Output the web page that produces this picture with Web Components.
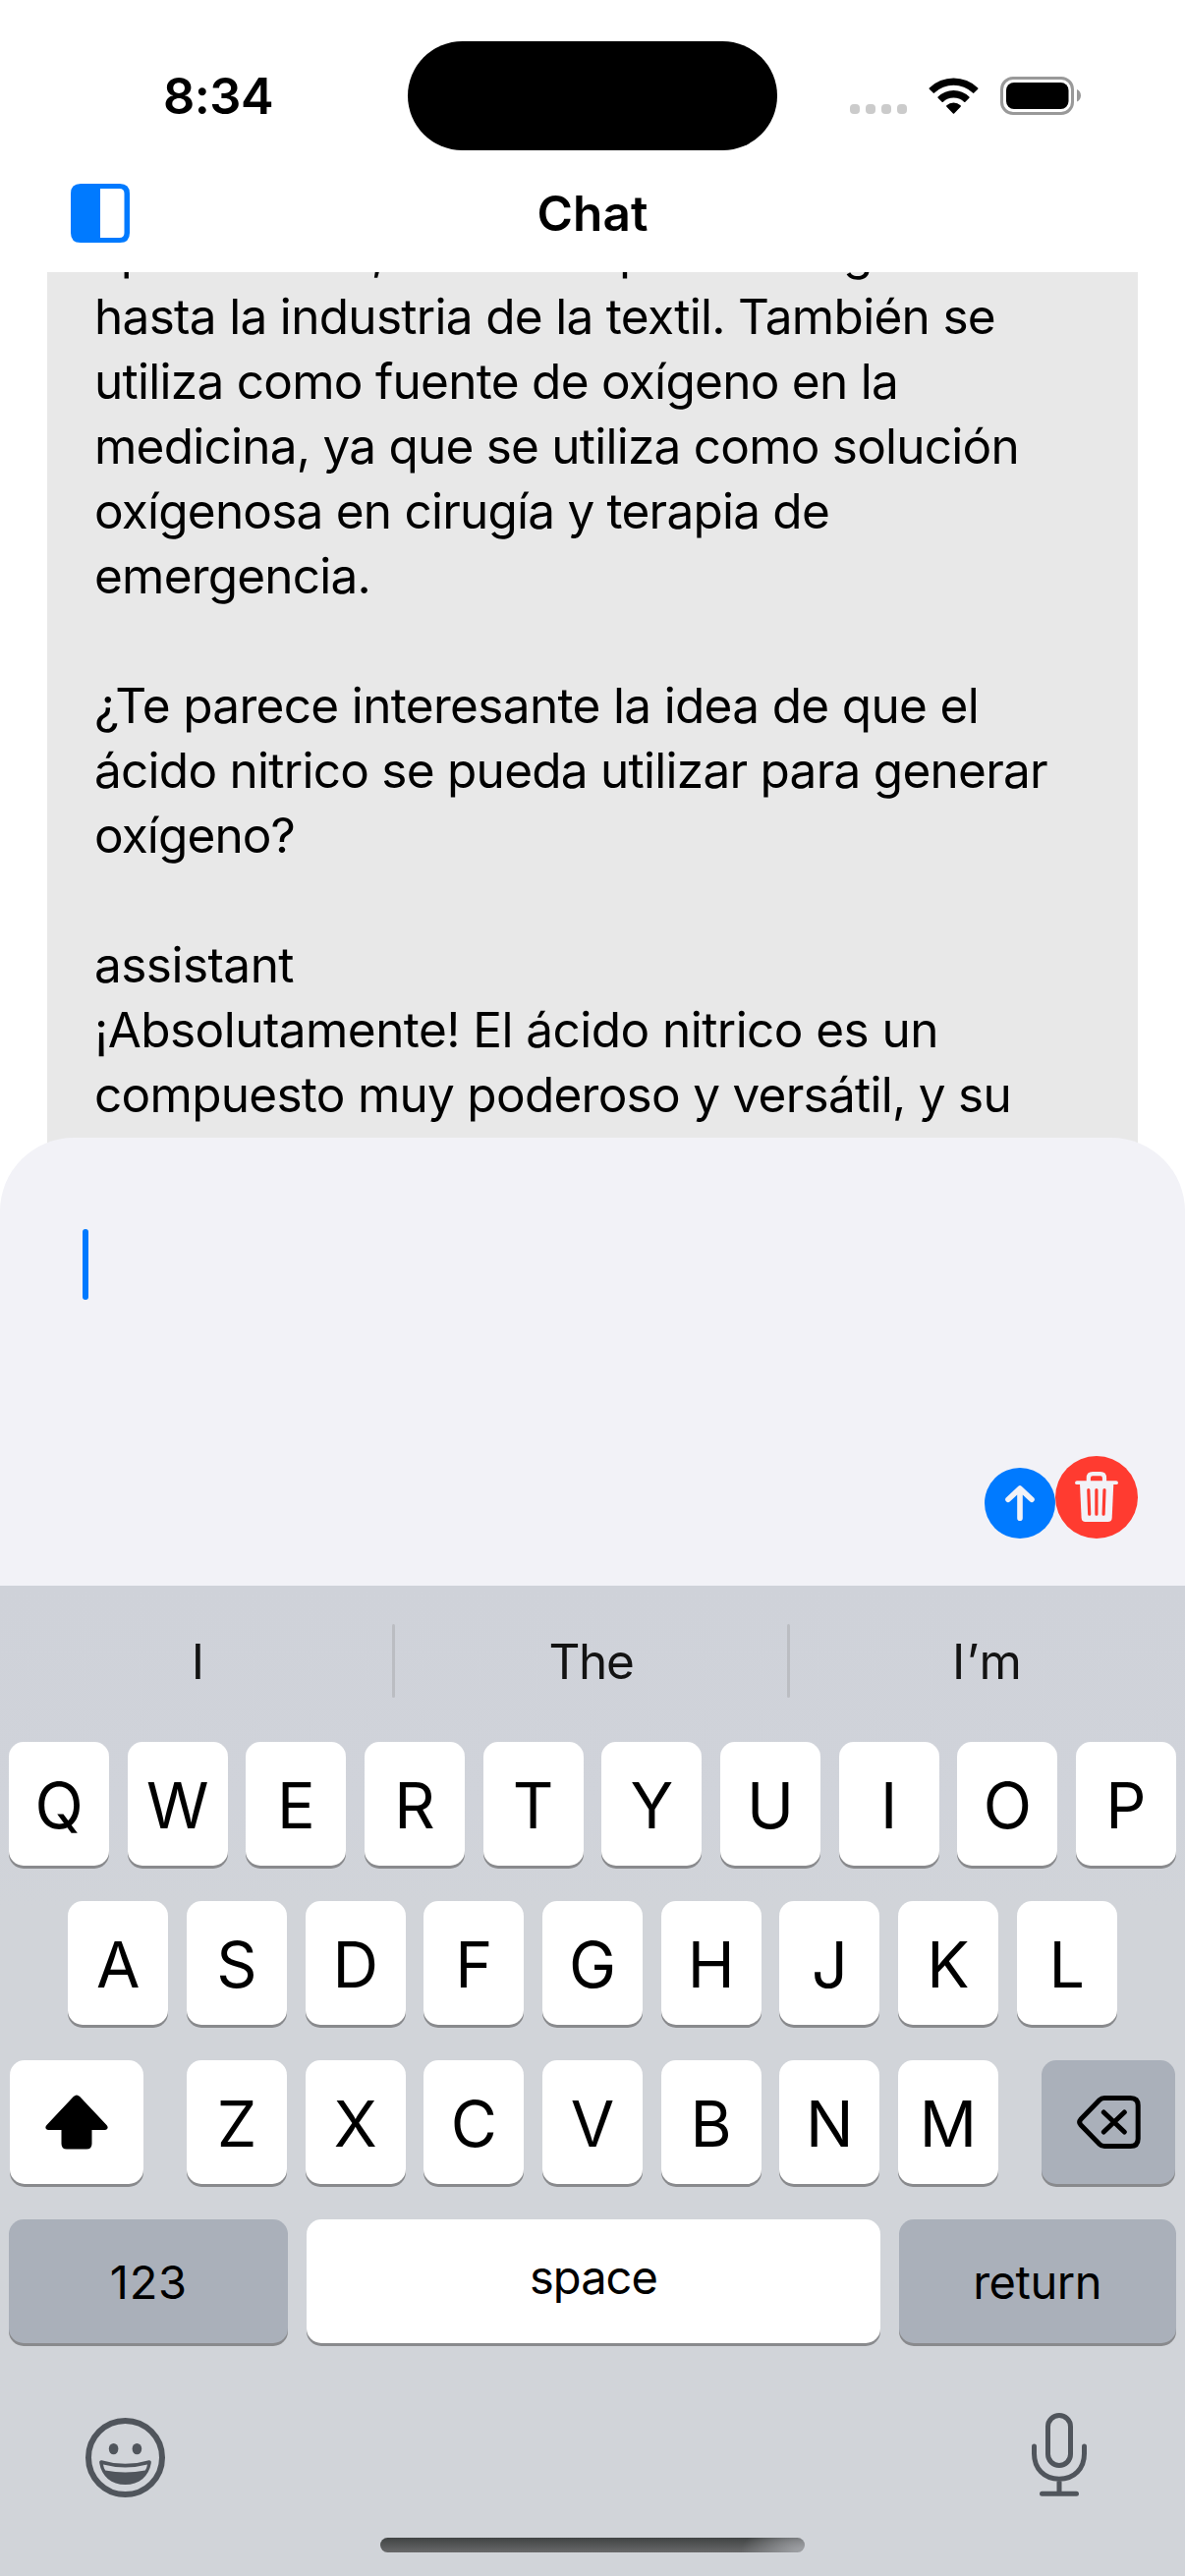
<!DOCTYPE html>
<html lang="es">
<head>
<meta charset="utf-8">
<title>Chat</title>
<style>
html,body{margin:0;padding:0;background:#fff}
body{width:1206px;height:2622px;overflow:hidden;font-family:Inter,"Liberation Sans",sans-serif;color:#000}
</style>
</head>
<body>
<chat-app></chat-app>
<script>
function define(name, html, extra) {
  const t = document.createElement('template');
  t.innerHTML = html;
  customElements.define(name, class extends HTMLElement {
    constructor() {
      super();
      this.attachShadow({mode: 'open'}).append(t.content.cloneNode(true));
    }
    connectedCallback() { if (extra) extra(this); }
  });
}

/* One line of text, tracked so that it takes the width named in its "w" attribute. */
define('fit-text', `<style>:host{display:block;white-space:pre;flex:none}span{display:inline-block;white-space:pre}</style><span></span>`, el => {
  const s = el.shadowRoot.querySelector('span');
  s.textContent = el.getAttribute('text');
  const w = +el.getAttribute('w');
  if (!w) return;
  const natural = s.getBoundingClientRect().width;
  s.style.letterSpacing = ((w - natural) / s.textContent.length).toFixed(3) + 'px';
  el.style.width = w + 'px';
});

define('status-bar', `<style>
:host{display:flex;height:153px;box-sizing:border-box;align-items:flex-start}
.time{width:415px;box-sizing:border-box;padding:68px 0 0 166px;font-size:50.5px;line-height:60px;font-weight:600}
.island{width:376px;height:111px;margin-top:42px;border-radius:56px;background:#000}
.dots{display:flex;gap:6px;margin:106px 0 0 74px}
.dots i{width:10px;height:10px;border-radius:4px;background:#cbcbcb}
svg{display:block}
.wifi{margin:79px 0 0 22px}.bat{margin:78px 0 0 22px}
</style>
<div class="time"><fit-text text="8:34" w="112"></fit-text></div>
<div class="island"></div>
<div class="dots"><i></i><i></i><i></i><i></i></div>
<svg class="wifi" width="51" height="38" viewBox="0 0 51 38">
<path d="M.8 10.4a35.5 35.5 0 0 1 49.4 0q.6.6 0 1.3l-3.9 3.9q-.7.6-1.3 0a28.3 28.3 0 0 0-39 0q-.6.6-1.3 0L.8 11.700q-.6-.7 0-1.300z"/>
<path d="M9.600 19.400a23 23 0 0 1 31.800 0q.6.6 0 1.300l-4 4q-.6.6-1.300 0a15.600 15.600 0 0 0-21.200 0q-.7.6-1.300 0l-4-4q-.6-.7 0-1.300z"/>
<path d="M18.400 28.300a10.700 10.700 0 0 1 14.200 0q.7.700 0 1.400l-6.500 6.800q-.6.6-1.200 0l-6.500-6.800q-.7-.7 0-1.400z"/></svg>
<svg class="bat" width="83" height="39" viewBox="0 0 83 39">
<rect x="1.500" y="1.500" width="72" height="36" rx="11.500" fill="none" stroke="#999" stroke-width="3"/>
<rect x="6" y="6" width="63.500" height="27" rx="8"/><path d="M78 13c5.300 2 5.300 10.500 0 12.500z" fill="#999"/></svg>`);

define('nav-bar', `<style>
:host{display:grid;grid-template-columns:1fr auto 1fr;height:124px;align-items:start}
svg{display:block;margin:34px 0 0 72px}
.title{margin-top:34px;font-size:49.500px;line-height:60px;font-weight:600}
</style>
<svg width="60" height="60" viewBox="0 0 60 60"><path fill="#007aff" fill-rule="evenodd" d="M10 0H50Q60 0 60 10V50Q60 60 50 60H10Q0 60 0 50V10Q0 0 10 0zM30 5V55H49.500Q54.500 55 54.500 50V10Q54.500 5 49.500 5z"/></svg>
<div class="title"><fit-text text="Chat" w="113"></fit-text></div>`);

define('chat-log', `<style>
:host{display:block;padding:0 48px;overflow:hidden}
.bubble{height:935px;overflow:hidden;background:#e8e8e8}
.lines{margin:-54px 48px 0;font-size:49.500px;line-height:66px}
.row{display:flex;height:66px}
.gap{height:66px}
</style><div class="bubble"><div class="lines">
<div class="row"><fit-text text="aplicaciones, " w="308"></fit-text><fit-text text="desde el " w="226"></fit-text><fit-text text="proceso agrícola" w="384"></fit-text></div>
<fit-text text="hasta la industria de la textil. También se" w="917"></fit-text>
<fit-text text="utiliza como fuente de oxígeno en la" w="818"></fit-text>
<fit-text text="medicina, ya que se utiliza como solución" w="941"></fit-text>
<fit-text text="oxígenosa en cirugía y terapia de" w="748"></fit-text>
<fit-text text="emergencia." w="281"></fit-text>
<div class="gap"></div>
<fit-text text="¿Te parece interesante la idea de que el" w="900"></fit-text>
<fit-text text="ácido nitrico se pueda utilizar para generar" w="970"></fit-text>
<fit-text text="oxígeno?" w="204"></fit-text>
<div class="gap"></div>
<fit-text text="assistant" w="203"></fit-text>
<fit-text text="¡Absolutamente! El ácido nitrico es un" w="859"></fit-text>
<fit-text text="compuesto muy poderoso y versátil, y su" w="933"></fit-text>
</div></div>`);

define('message-composer', `<style>
:host{display:flex;flex-direction:column;justify-content:space-between;height:456px;box-sizing:border-box;padding:93px 48px 48px 84px;border-radius:75px 75px 0 0;background:#f2f2f7}
.caret{width:6px;height:72px;border-radius:3px;background:#007aff}
.actions{display:flex;justify-content:flex-end;align-items:flex-end}
svg{display:block}
</style><div class="caret"></div>
<div class="actions">
<svg width="72" height="72" viewBox="0 0 72 72"><circle cx="36" cy="36" r="36" fill="#007aff"/><path d="M36 51.200V21.500M24 32.300L36 21L48 32.300" fill="none" stroke="#f2f2f7" stroke-width="5.600" stroke-linecap="round" stroke-linejoin="round"/></svg>
<svg width="84" height="84" viewBox="0 0 84 84"><circle cx="42" cy="42" r="42" fill="#ff3b30"/>
<g fill="none" stroke="#f2f2f7"><path d="M22 27.200H62" stroke-width="3.800" stroke-linecap="round"/><path d="M33.800 27V22.500Q33.800 18.200 38 18.200H46Q50 18.200 50 22.500V27" stroke-width="4.200"/></g>
<path d="M25 28H59.300L57.700 63Q57.500 67 53.500 67H30.700Q26.800 67 26.600 63z" fill="#f2f2f7"/>
<path d="M33.800 34.500L34.700 59.200M41.900 34.500V59.200M50 34.500L49.100 59.200" stroke="#ff3b30" stroke-width="3.200" stroke-linecap="round"/></svg>
</div>`);

define('suggestion-bar', `<style>
:host{display:grid;grid-template-columns:399px 3px 399px 3px 402px;height:159px;align-items:start;color:#131313;font-size:49.500px;line-height:60px}
div{display:flex;justify-content:center;padding-top:47px}
div:first-of-type{padding-left:4px}
i{width:3px;height:75px;margin-top:39px;border-radius:2px;background:#bbbdc2}
</style><div><fit-text text="I"></fit-text></div><i></i><div><fit-text text="The" w="86"></fit-text></div><i></i><div><fit-text text="I’m" w="72"></fit-text></div>`);

define('key-cap', `<style>
:host{display:flex;flex:none;width:102px;height:126px;box-sizing:border-box;justify-content:center;border-radius:15px;background:#fff;box-shadow:0 3px 0 #898a8d;font-size:64.500px;line-height:130px}
:host([wide]){width:136px;align-items:center}
:host([grey]){background:#aab0ba}
:host([label]){font-size:47px;line-height:126px}
</style><slot></slot>`);

define('key-row', `<style>:host{display:flex;justify-content:center;gap:18.667px;height:126px}</style><slot></slot>`, el => {
  const letters = el.getAttribute('letters');
  if (!letters) return;
  const keys = [...letters].map(c => { const k = document.createElement('key-cap'); k.textContent = c; return k; });
  const last = el.querySelector('[end]');
  keys.forEach(k => el.insertBefore(k, last));
});

define('soft-keyboard', `<style>
:host{display:flex;flex-direction:column;height:1008px;background:linear-gradient(#cfd2d9 0,#d0d3da 220px,#d1d4d9 330px)}
.rows{display:flex;flex-direction:column;gap:36px}
[start]{margin-right:25.500px}[end]{margin-left:25.500px}
.foot{display:flex;justify-content:space-between;padding:68px 98px 0 87px}
svg{display:block}
.home{width:432px;height:15px;margin:40px auto 0;border-radius:8px;background:radial-gradient(ellipse 65px 32px at 100% 100%,#9b9da1 15%,#9b9da100 100%),linear-gradient(#404343,#68696a)}
</style>
<suggestion-bar></suggestion-bar>
<div class="rows">
<key-row letters="QWERTYUIOP"></key-row>
<key-row letters="ASDFGHJKL"></key-row>
<key-row letters="ZXCVBNM"><key-cap wide start><svg width="64" height="56" viewBox="0 0 64 56"><path d="M28.800 2Q32 -1 35.200 2L62.500 31Q64.500 33.500 63 35Q62.300 36 60.500 36H47.500V50Q47.500 55.500 42 55.500H22Q16.500 55.500 16.500 50V36H3.500Q1.700 36 1 35Q-.5 33.500 1.500 31z"/></svg></key-cap><key-cap wide grey end><svg width="65" height="54" viewBox="0 0 65 54"><path d="M28 2.500H54.500Q62.200 2.500 62.200 10V44Q62.200 51.500 54.500 51.500H28Q25 51.500 23 49.500L3.800 29.700Q1.500 27 3.800 24.300L23 4.500Q25 2.500 28 2.500zM27.300 17L48.300 37M48.300 17L27.300 37" fill="none" stroke="#000" stroke-width="5" stroke-linecap="round" stroke-linejoin="round"/></svg></key-cap></key-row>
<key-row><key-cap label grey style="width:284px;line-height:127px"><fit-text text="123" w="79"></fit-text></key-cap><key-cap label style="width:584px;line-height:118px"><fit-text text="space" w="130"></fit-text></key-cap><key-cap label grey style="width:282px;line-height:127px"><fit-text text="return" w="131"></fit-text></key-cap></key-row>
</div>
<div class="foot">
<svg width="82" height="90" viewBox="0 0 82 90"><g fill="#50555c"><circle cx="40.500" cy="48.500" r="37.500" fill="none" stroke="#50555c" stroke-width="6"/><ellipse cx="28.600" cy="39.600" rx="4.800" ry="5.700"/><ellipse cx="52.400" cy="39.600" rx="4.800" ry="5.700"/><path fill-rule="evenodd" d="M16.500 51.200Q40.500 58.500 64.500 51.200Q67.200 51 66.800 54C64.500 68 54.500 76 40.500 76S16.500 68 14.200 54Q13.800 51 16.500 51.200zM18 55.500Q18.500 59 20.200 61.500Q40.500 65.500 60.800 61.500Q62.500 59 63 55.500Q40.500 61.500 18 55.500z"/></g></svg>
<svg width="60" height="90" viewBox="0 0 60 90"><g fill="none" stroke="#50555c" stroke-width="5" stroke-linecap="round"><rect x="18.500" y="5.500" width="23" height="51" rx="11.500"/><path d="M4.500 37V44.500C4.500 59.500 14.500 70.200 30 70.200S55.500 59.500 55.500 44.500V37M30 70.200V84M12.500 85.300H47.500"/></g></svg>
</div>
<div class="home"></div>`);

define('chat-app', `<style>
:host{display:flex;flex-direction:column;width:1206px;height:2622px;background:#fff}
chat-log{flex:none;height:974px;margin-bottom:-93px}
message-composer{position:relative}
</style>
<status-bar></status-bar><nav-bar></nav-bar><chat-log></chat-log><message-composer></message-composer><soft-keyboard></soft-keyboard>`);
</script>
</body>
</html>
